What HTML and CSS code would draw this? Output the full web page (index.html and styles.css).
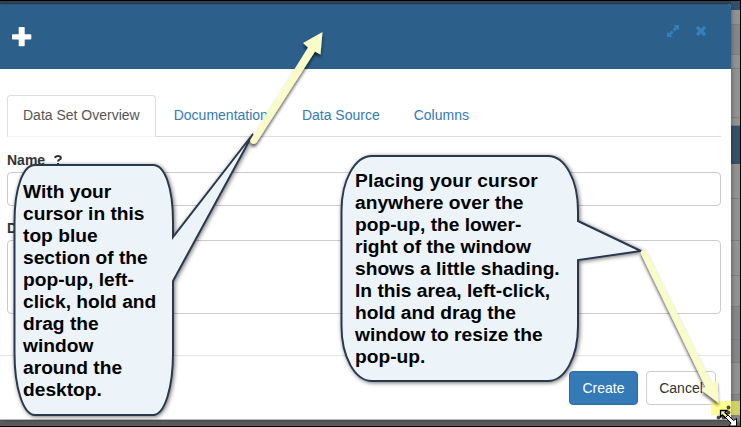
FILE: index.html
```
<!DOCTYPE html>
<html lang="en">
<head>
<meta charset="utf-8">
<title>Data Set</title>
<link rel="stylesheet" href="styles.css">
</head>
<body>
<main class="screen">
  <section class="modal">
    <header class="modal-header">
      <svg class="plus" width="20" height="20" viewBox="0 0 20 20"><path d="M7.5 0h4.4q.8 0 .8.8v6.4h5.7q.9 0 .9.9v3.5q0 .9-.9.9h-5.7v6q0 .7-.8.7H7.5q-.8 0-.8-.7v-6H.8q-.8 0-.8-.9V8.100q0-.9.8-.9h5.900V.8q0-.8.800-.8z"/></svg>
      <div class="tools">
        <svg width="12" height="12" viewBox="0 0 12 12"><path d="M6.500 0H12v5.500L10.300 3.800 7.500 6.500 5.500 4.500 8.200 1.700zM0 12V6.500L1.700 8.200 4.500 5.500 6.500 7.500 3.800 10.300 5.500 12z"/></svg>
        <svg width="10" height="10" viewBox="0 0 10 10"><path d="M2 2l6 6M8 2l-6 6" class="cross"/></svg>
      </div>
    </header>
    <div class="modal-body">
      <nav class="tabs">
        <a class="tab active">Data Set Overview</a>
        <a class="tab">Documentation</a>
        <a class="tab">Data Source</a>
        <a class="tab">Columns</a>
      </nav>
      <div class="label">Name<svg class="help" width="8" height="10" viewBox="0 0 8 10"><path d="M1 3Q1.400 1.100 4 1.100T6.900 3Q6.900 4.100 5.500 4.700T4.100 6.500M4 8v2"/></svg></div>
      <div class="input"></div>
      <div class="label">D</div>
      <div class="textarea"></div>
    </div>
    <footer class="modal-footer">
      <button class="btn primary">Create</button>
      <button class="btn">Cancel</button>
    </footer>
  </section>
  <aside class="backdrop">
    <div class="navy row-a"></div>
    <div class="row-b"></div>
    <div class="dim row-c"></div>
    <div class="row-d"></div>
    <div class="row-e"></div>
    <div class="row-f"></div>
    <div class="navy row-g"></div>
    <div class="row-h"></div>
    <div class="row-i"></div>
    <div class="row-j"></div>
    <div class="row-k"></div>
    <div class="dim row-l"></div>
    <div class="dim row-m"></div>
    <div class="row-n"></div>
    <div class="dim row-o"></div>
  </aside>
  <svg class="overlay" width="741" height="427" viewBox="0 0 741 427">
    <defs>
      <filter id="shade" x="-20%" y="-20%" width="140%" height="140%"><feDropShadow dx="1" dy="1" stdDeviation="2" flood-color="#000" flood-opacity=".55"/></filter>
      <filter id="arrow-shade" x="-20%" y="-20%" width="140%" height="140%"><feDropShadow dx="0" dy="3" stdDeviation="1.800" flood-color="#000" flood-opacity=".6"/></filter>
    </defs>
    <g class="bubble" filter="url(#shade)">
      <path d="M35 165H153C165 165 173 188 173 222V237L253 134L173 281V353C173 387 165 415 153 415H35C23 415 14.500 387 14.500 353V222C14.500 188 23 165 35 165Z"/>
      <path d="M372 156H548C565 156 578 180 578 211V221L641 251L578 260V326C578 357 565 381 548 381H372C355 381 341.500 357 341.500 326V211C341.500 180 355 156 372 156Z"/>
    </g>
    <rect class="glow" x="711" y="401" width="29" height="14"/>
    <g class="arrow" filter="url(#arrow-shade)">
      <path d="M250.500 139.500L308 47.500L303 43L322.500 32L320.500 54.500L315 51.500L256.500 142.500Q254 145 251.500 143Q249.500 141 250.500 139.500Z"/>
      <path d="M641 254Q640 250 643.500 250Q646 250 647 252L711.500 383L717.500 380L718.500 403L701.500 390L705.500 387Z"/>
    </g>
    <g class="dots">
      <circle cx="728.500" cy="407.500" r="1.900"/><circle cx="728.500" cy="412.500" r="1.900"/><circle cx="728.500" cy="417.500" r="1.900"/><circle cx="723.500" cy="412.500" r="1.900"/><circle cx="723.500" cy="417.500" r="1.900"/><circle cx="718.500" cy="417.500" r="1.900"/>
    </g>
    <path class="cursor-head" d="M720.500 410.500H727L725 412.500L728 415.500L725.500 418L722.500 415L720.500 417Z"/>
    <path class="cursor-tail" d="M725.500 417.500L728 415L733.500 420.500L736.500 418.500V426H729L731 423Z"/>
  </svg>
  <p class="note note-left">With your<br>cursor in this<br>top blue<br>section of the<br>pop-up, left-<br>click, hold and<br>drag the<br>window<br>around the<br>desktop.</p>
  <p class="note note-right"><span class="wide">Placing your cursor</span><br>anywhere over the<br>pop-up, the lower-<br>right of the window<br>shows a little shading.<br>In this area, left-click,<br>hold and drag the<br>window to resize the<br>pop-up.</p>
</main>
</body>
</html>
```
FILE: styles.css
```
* { box-sizing: border-box; }
body { margin: 0; overflow: hidden; font: 14px/20px "Liberation Sans", Arial, sans-serif; color: #333; }
.screen { position: relative; display: grid; grid-template-columns: 731px 9px; width: 741px; height: 427px; border: solid #000; border-width: 1px 1px 1px 0; background: linear-gradient(#2f455b 0 9px, #666769 9px 422px, #5d5e60 422px); }
.modal { display: flex; flex-direction: column; height: 416px; margin-top: 3px; background: #fff; border-radius: 0 4px 0 0; box-shadow: 0 1px 5px rgba(0,0,0,.45); border-bottom: 1px solid #bbb; z-index: 1; }
.modal-header { display: flex; justify-content: space-between; height: 65px; flex: none; padding: 21px 25px 0 12px; background: #2c5f8a; border-radius: 0 4px 0 0; border-top: 1px solid #28557b; }
.plus { fill: #fff; margin-top: 1px; }
.tools { display: flex; gap: 17px; align-items: flex-start; margin-top: -1px; fill: #337fbe; }
.tools svg:last-child { margin-top: 1px; overflow: visible; }
.cross { stroke: #3581bf; stroke-width: 3.4; stroke-linecap: round; }
.modal-body { height: 286px; padding: 26px 10px 0 7px; flex: none; }
.tabs { display: flex; gap: 2px; height: 42px; border-bottom: 1px solid #ddd; margin-bottom: 13px; }
.tab { height: 42px; padding: 9px 15px; border: 1px solid transparent; border-radius: 4px 4px 0 0; color: #337ab7; white-space: nowrap; }
.tab.active { color: #555; background: #fff; border-color: #ddd #ddd #f4f4f4; }
.label { height: 22px; font-weight: 700; }
.help { margin-left: 9px; fill: none; stroke: #333; stroke-width: 2; }
.input { height: 34px; border: 1px solid #ccc; border-radius: 4px; margin-bottom: 12px; }
.textarea { height: 74px; border: 1px solid #ccc; border-radius: 4px; }
.modal-footer { display: flex; flex: 1; justify-content: flex-end; align-items: flex-start; gap: 8px; padding: 15px 15px 0; border-top: 1px solid #e5e5e5; }
.btn { height: 34px; width: 70px; padding: 0; border: 1px solid #ccc; border-radius: 4px; background: #fff; color: #333; font: inherit; }
.btn.primary { width: 69px; background: #337ab7; border-color: #2e6da4; color: #fff; }
.backdrop { display: flex; flex-direction: column; height: 420px; background: #929292; }
.backdrop div { flex: none; border-bottom: 1px solid #7d7d7d; }
.backdrop .navy { background: #34506b; border: 0; }
.backdrop .dim { background: #84868a; }
.row-a { height: 9px; } .row-b { height: 15px; } .row-c { height: 30px; } .row-d { height: 14px; } .row-e { height: 49px; } .row-f { height: 8px; } .row-g { height: 38px; } .row-h { height: 35px; } .row-i { height: 42px; } .row-j { height: 35px; } .row-k { height: 31px; } .row-l { height: 33px; } .row-m { height: 23px; } .row-n { height: 32px; } .row-o { height: 26px; }
.overlay { position: absolute; left: 0; top: -1px; z-index: 2; }
.bubble { fill: #ecf4fa; stroke: #2b384d; stroke-width: 2; }
.arrow { fill: #f9fbc8; }
.glow { fill: #ffff50; opacity: .62; mix-blend-mode: multiply; }
.dots { fill: #4b4b45; }
.cursor-head { fill: #f4f3a0; stroke: #000; stroke-width: 1.3; }
.cursor-tail { fill: #fff; stroke: #000; stroke-width: 1; }
.note { position: absolute; z-index: 3; margin: 0; color: #000; font-weight: 700; font-size: 19.2px; line-height: 22px; white-space: nowrap; }
.note-left { left: 23px; top: 180px; }
.note-right { left: 355px; top: 169px; }
.wide { letter-spacing: .14px; }
```
